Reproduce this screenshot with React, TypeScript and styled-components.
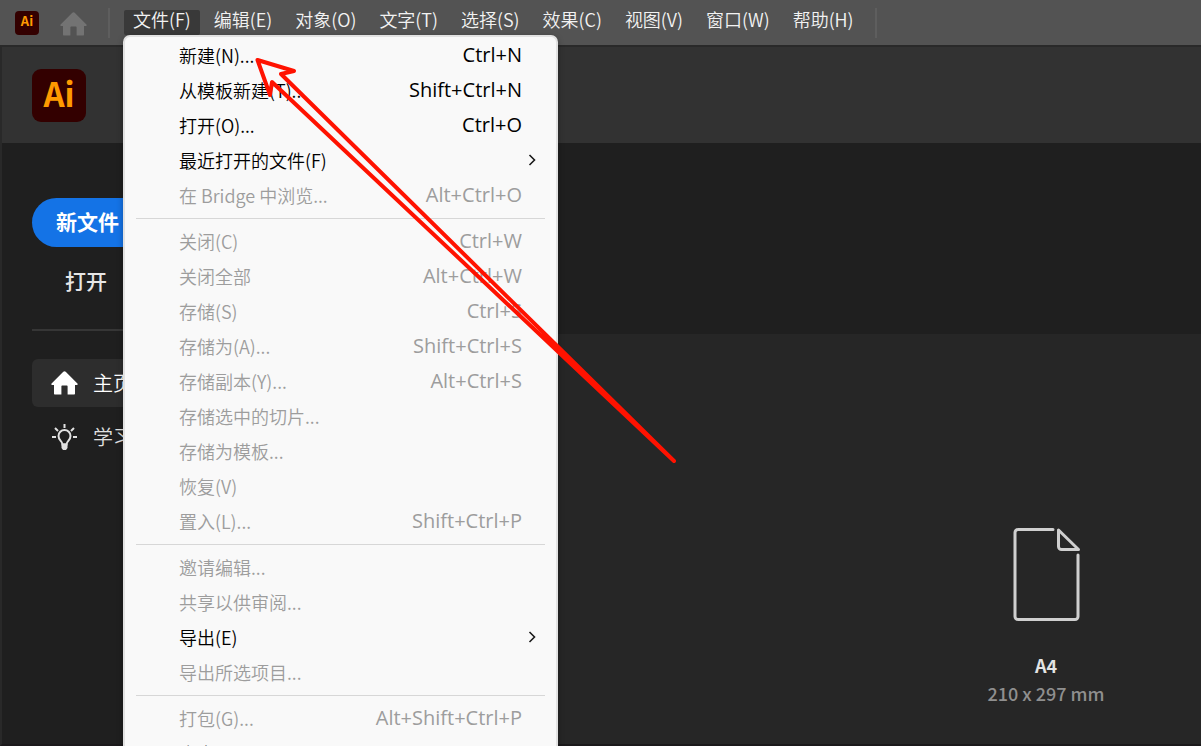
import React from 'react';
import styled, { createGlobalStyle } from 'styled-components';

const GlobalStyle = createGlobalStyle`
  *, *::before, *::after { box-sizing: border-box; }
  body { margin: 0; background: #1f1f1f; }
  body, button { font-family: "Noto Sans CJK SC", "Noto Sans", sans-serif; }
  button { border: 0; padding: 0; margin: 0; background: none; color: inherit; text-align: left; }
  ul { list-style: none; margin: 0; padding: 0; }
`;

const Window = styled.div`
  position: relative;
  display: flex;
  flex-direction: column;
  height: 100vh;
  overflow: hidden;
`;

const MenuBar = styled.nav`
  display: flex;
  align-items: center;
  flex-shrink: 0;
  height: 45px;
  padding-left: 15px;
  background: #535353;
`;

const AppBadge = styled.span<{ $large?: boolean }>`
  display: flex;
  align-items: center;
  justify-content: center;
  width: ${(p) => (p.$large ? '54px' : '24px')};
  height: ${(p) => (p.$large ? '53px' : '24px')};
  padding-bottom: 4px;
  border-radius: ${(p) => (p.$large ? '9px' : '4px')};
  background: #330000;
  color: #ff9a00;
  font-size: ${(p) => (p.$large ? '33px' : '13px')};
  font-weight: 700;
  line-height: 1;
`;

const HomeShortcut = styled.button`
  display: flex;
  margin: 2px 21px 0 21px;
  color: #737373;
`;

const BarDivider = styled.span`
  width: 2px;
  height: 30px;
  background: #5e5e5e;
`;

const MenuTitles = styled.ul`
  display: flex;
  gap: 5px;
  margin: 0 12px 0 14px;
`;

const MenuEntry = styled.li`
  position: relative;
`;

const MenuTitle = styled.button<{ $open?: boolean }>`
  display: block;
  height: 25px;
  padding: 0 9px 6px;
  border-radius: 2px;
  background: ${(p) => (p.$open ? '#393939' : 'transparent')};
  color: #f2f2f2;
  font-size: 18px;
  font-weight: 350;
  line-height: 19px;
  white-space: nowrap;
`;

const Dropdown = styled.ul`
  position: absolute;
  z-index: 2;
  top: 25px;
  left: -1px;
  width: 435px;
  padding-top: 1px;
  border: 2px solid #e2e2e2;
  border-radius: 7px;
  background: #f9f9f9;
  box-shadow: 0 2px 6px rgba(0, 0, 0, 0.3);
`;

const MenuItem = styled.button`
  display: flex;
  align-items: center;
  justify-content: space-between;
  width: 100%;
  height: 35px;
  padding: 0 34px 1px 54px;
  color: #000;
  font-size: 18px;
  font-weight: 350;
  line-height: 34px;
  white-space: nowrap;

  &:disabled { color: #9d9d9d; }
`;

const Shortcut = styled.span`
  font-family: "Open Sans", "Noto Sans", sans-serif;
  font-size: 20px;
  font-weight: 400;
`;

const SubmenuMark = styled.svg`
  margin-right: -15px;
`;

const Separator = styled.li`
  height: 1px;
  margin: 5px 11px;
  background: #d7d7d7;
`;

const Workspace = styled.div`
  display: flex;
  flex-direction: column;
  flex: 1;
  border: 2px solid #292929;
  border-right: 0;
  border-bottom-color: #1b191b;
`;

const Header = styled.header`
  display: flex;
  align-items: flex-start;
  height: 96px;
  padding: 22px 30px;
  background: #323232;
`;

const Body = styled.div`
  display: grid;
  grid-template-columns: 180px 1fr;
  flex: 1;
  background: #1f1f1f;
`;

const Sidebar = styled.aside`
  display: flex;
  flex-direction: column;
  padding: 55px 16px 0 30px;
`;

const NewFile = styled.button`
  height: 49px;
  padding: 0 24px 4px;
  border-radius: 25px;
  background: #1473e6;
  color: #fff;
  font-size: 21px;
  font-weight: 700;
  line-height: 44px;
  white-space: nowrap;
`;

const OpenFile = styled.button`
  height: 48px;
  margin-top: 11px;
  padding: 0 33px 4px;
  color: #e6e6e6;
  font-size: 21px;
  font-weight: 500;
  line-height: 44px;
`;

const SideRule = styled.hr`
  width: 100%;
  height: 2px;
  margin: 23px 0 28px;
  border: 0;
  background: #363636;
`;

const SideList = styled.ul`
  display: flex;
  flex-direction: column;
  gap: 6px;
`;

const SideLink = styled.button<{ $active?: boolean }>`
  display: flex;
  align-items: center;
  gap: 15px;
  width: 100%;
  height: 48px;
  padding-left: 19px;
  border-radius: 6px;
  background: ${(p) => (p.$active ? '#2d2d2d' : 'transparent')};
  color: ${(p) => (p.$active ? '#fff' : '#e1e1e1')};
  font-size: 20px;
  font-weight: 350;
  line-height: 48px;
`;

const Main = styled.main`
  display: flex;
  flex-direction: column;
  padding-top: 191px;
`;

const Presets = styled.section`
  display: flex;
  justify-content: flex-end;
  align-items: flex-start;
  flex: 1;
  padding: 193px 86px 0 0;
  background: #262626;
`;

const Preset = styled.button`
  display: flex;
  flex-direction: column;
  align-items: center;
  width: 138px;
  font-size: 18px;
  line-height: 28px;
  white-space: nowrap;
`;

const PresetName = styled.strong`
  margin-top: 29px;
  color: #e3e3e3;
  font-weight: 700;
`;

const PresetSize = styled.span`
  color: #8f8f8f;
  font-weight: 500;
`;

const Annotation = styled.svg`
  position: absolute;
  z-index: 3;
  top: 0;
  left: 0;
  pointer-events: none;
`;

const HomeIcon = () => (
  <svg width="27" height="24" viewBox="0 0 27 24" fill="currentColor" aria-hidden="true">
    <path d="M12.3.8a1.7 1.7 0 0 1 2.4 0L26.4 12.6c.6.6.3 1.4-.5 1.4H24v8.6c0 .6-.4 1-1 1h-6.400v-8.200c0-.6-.4-1-1-1h-4.200c-.6 0-1 .4-1 1v8.200H4c-.6 0-1-.4-1-1V14H1.100c-.8 0-1.100-.8-.5-1.400z" />
  </svg>
);

const BulbIcon = () => (
  <svg width="27" height="27" viewBox="0 0 27 27" fill="none" stroke="currentColor" strokeWidth="2" aria-hidden="true">
    <path d="M11.500 20.500C11.500 17 7.500 16.500 7.500 12a6 6 0 0 1 12 0c0 4.500-4 5-4 8.500z" />
    <path d="M10.500 19.500h6v4.500l-1.500 2h-3l-1.500-2z" fill="currentColor" stroke="none" />
    <path d="M13.500 0v4M1 13h4M22 13h4M4 4l3 3M23 4l-3 3" />
  </svg>
);

const PageIcon = () => (
  <svg width="68" height="95" viewBox="-1 0 68 95" fill="none" stroke="#cfcfcf" strokeWidth="3" strokeLinecap="round" strokeLinejoin="round" aria-hidden="true">
    <path d="M40 2.500H5a3 3 0 0 0-3 3V89.500a3 3 0 0 0 3 3H62a3 3 0 0 0 3-3V28" />
    <path d="M45.500 3V19.500a3 3 0 0 0 3 3H65.500z" />
  </svg>
);

const titles = ['文件(F)', '编辑(E)', '对象(O)', '文字(T)', '选择(S)', '效果(C)', '视图(V)', '窗口(W)', '帮助(H)'];

type Item = { label: string; keys?: string; enabled?: boolean; submenu?: boolean };

const groups: Item[][] = [
  [
    { label: '新建(N)...', keys: 'Ctrl+N', enabled: true },
    { label: '从模板新建(T)...', keys: 'Shift+Ctrl+N', enabled: true },
    { label: '打开(O)...', keys: 'Ctrl+O', enabled: true },
    { label: '最近打开的文件(F)', enabled: true, submenu: true },
    { label: '在 Bridge 中浏览...', keys: 'Alt+Ctrl+O' },
  ],
  [
    { label: '关闭(C)', keys: 'Ctrl+W' },
    { label: '关闭全部', keys: 'Alt+Ctrl+W' },
    { label: '存储(S)', keys: 'Ctrl+S' },
    { label: '存储为(A)...', keys: 'Shift+Ctrl+S' },
    { label: '存储副本(Y)...', keys: 'Alt+Ctrl+S' },
    { label: '存储选中的切片...' },
    { label: '存储为模板...' },
    { label: '恢复(V)' },
    { label: '置入(L)...', keys: 'Shift+Ctrl+P' },
  ],
  [
    { label: '邀请编辑...' },
    { label: '共享以供审阅...' },
    { label: '导出(E)', enabled: true, submenu: true },
    { label: '导出所选项目...' },
  ],
  [
    { label: '打包(G)...', keys: 'Alt+Shift+Ctrl+P' },
    { label: '脚本(R)', enabled: true, submenu: true },
  ],
];

const FileMenu = () => (
  <Dropdown>
    {groups.map((items, index) => (
      <React.Fragment key={index}>
        {index > 0 && <Separator role="separator" />}
        {items.map((item) => (
          <li key={item.label}>
            <MenuItem type="button" disabled={!item.enabled}>
              <span>{item.label}</span>
              {item.keys && <Shortcut>{item.keys}</Shortcut>}
              {item.submenu && (
                <SubmenuMark width="9" height="12" viewBox="0 0 9 12" fill="none" stroke="#1a1a1a" strokeWidth="1.600" aria-hidden="true">
                  <path d="M1.500 1L6.500 6L1.500 11" />
                </SubmenuMark>
              )}
            </MenuItem>
          </li>
        ))}
      </React.Fragment>
    ))}
  </Dropdown>
);

export default function App() {
  return (
    <Window>
      <GlobalStyle />
      <MenuBar>
        <AppBadge>Ai</AppBadge>
        <HomeShortcut type="button" aria-label="主页">
          <HomeIcon />
        </HomeShortcut>
        <BarDivider />
        <MenuTitles>
          {titles.map((title, index) => (
            <MenuEntry key={title}>
              <MenuTitle type="button" $open={index === 0}>{title}</MenuTitle>
              {index === 0 && <FileMenu />}
            </MenuEntry>
          ))}
        </MenuTitles>
        <BarDivider />
      </MenuBar>
      <Workspace>
        <Header>
          <AppBadge $large>Ai</AppBadge>
        </Header>
        <Body>
          <Sidebar>
            <NewFile type="button">新文件</NewFile>
            <OpenFile type="button">打开</OpenFile>
            <SideRule />
            <SideList>
              <li>
                <SideLink type="button" $active><HomeIcon />主页</SideLink>
              </li>
              <li>
                <SideLink type="button"><BulbIcon />学习</SideLink>
              </li>
            </SideList>
          </Sidebar>
          <Main>
            <Presets>
              <Preset type="button">
                <PageIcon />
                <PresetName>A4</PresetName>
                <PresetSize>210 x 297 mm</PresetSize>
              </Preset>
            </Presets>
          </Main>
        </Body>
      </Workspace>
      <Annotation width="700" height="480" viewBox="0 0 700 480" fill="none" stroke="#ff1200" strokeWidth="4" strokeLinejoin="round" aria-hidden="true">
        <path d="M257.500 60L294 71L281 74L674 461L272 82L270 95Z" />
      </Annotation>
    </Window>
  );
}
